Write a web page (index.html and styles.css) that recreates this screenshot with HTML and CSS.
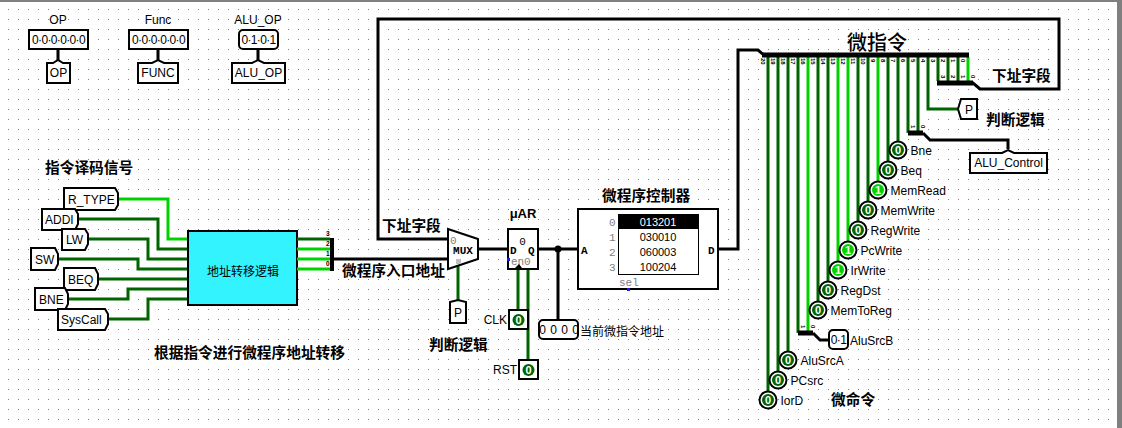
FILE: index.html
```html
<!DOCTYPE html>
<html lang="zh">
<head>
<meta charset="utf-8">
<title>微程序控制器</title>
<link rel="stylesheet" href="styles.css">
</head>
<body>
<svg class="canvas" width="1122" height="428" viewBox="0 0 1122 428" xmlns="http://www.w3.org/2000/svg">
  <rect class="frame" width="1122" height="2"/>
  <rect class="frame" x="1117" width="5" height="428"/>

  <!-- top pins -->
  <text class="t c" x="58" y="24">OP</text>
  <text class="t c" x="158" y="24">Func</text>
  <text class="t c" x="258" y="24">ALU_OP</text>
  <path class="bus" d="M58 49V60M158 49V60M258 49V60"/>
  <rect class="shape" x="29" y="30" width="59" height="19"/>
  <rect class="shape" x="129" y="30" width="59" height="19"/>
  <rect class="shape" x="239" y="30" width="39" height="19" rx="4"/>
  <text class="t c digits" x="58.500" y="43.500">0·0·0·0·0·0</text>
  <text class="t c digits" x="158.500" y="43.500">0·0·0·0·0·0</text>
  <text class="t c digits" x="258.500" y="43.500">0·1·0·1</text>
  <polygon class="shape" points="47,63 53,63 58,60 63,63 70,63 70,83 47,83"/>
  <polygon class="shape" points="138,63 152,63 158,60 164,63 178,63 178,83 138,83"/>
  <polygon class="shape" points="232,63 252,63 258,60 264,63 285,63 285,83 232,83"/>
  <text class="t c" x="58.500" y="77">OP</text>
  <text class="t c" x="158" y="77">FUNC</text>
  <text class="t c" x="258.500" y="77">ALU_OP</text>

  <text class="cn b" x="45" y="173">指令译码信号</text>

  <!-- address logic inputs -->
  <path class="on" d="M118 199H168V239H189"/>
  <path class="off" d="M78 219H158V249H189M88 239H148V259H189M58 259H138V269H189M98 279H189M68 299H128V289H189M108 319H148V299H189"/>
  <polygon class="shape" points="64,188 115,188 118,193 118,205 115,210 64,210"/>
  <polygon class="shape" points="42,209 75,209 78,214 78,224 75,230 42,230"/>
  <polygon class="shape" points="62,229 85,229 88,234 88,244 85,250 62,250"/>
  <polygon class="shape" points="31,248 55,248 58,254 58,264 55,270 31,270"/>
  <polygon class="shape" points="64,268 95,268 98,274 98,284 95,290 64,290"/>
  <polygon class="shape" points="35,288 65,288 68,294 68,304 65,310 35,310"/>
  <polygon class="shape" points="58,309 105,309 108,314 108,324 105,330 58,330"/>
  <text class="t" x="68" y="204">R_TYPE</text>
  <text class="t" x="45" y="224">ADDI</text>
  <text class="t" x="66" y="244">LW</text>
  <text class="t" x="35" y="264">SW</text>
  <text class="t" x="68" y="284">BEQ</text>
  <text class="t" x="39" y="304">BNE</text>
  <text class="t" x="61" y="324">SysCall</text>

  <rect class="logic" x="188" y="231" width="109" height="74"/>
  <text class="cn m" x="243" y="276">地址转移逻辑</text>
  <path class="off" d="M297 239H330"/>
  <path class="on" d="M297 249H330M297 259H330M297 269H330"/>
  <rect class="fill" x="330" y="238" width="4" height="33"/>
  <text class="tiny" x="326" y="236">3</text>
  <text class="tiny" x="326" y="246">2</text>
  <text class="tiny" x="326" y="256">1</text>
  <text class="tiny" x="326" y="266">0</text>
  <path class="bus" d="M334 259H448"/>
  <text class="cn b" x="342" y="276">微程序入口地址</text>
  <text class="cn b" x="154" y="358">根据指令进行微程序地址转移</text>

  <!-- feedback loop -->
  <path class="bus" d="M448 239H378V19H1059V89H980L973 83H937"/>
  <text class="cn b" x="382" y="231">下址字段</text>

  <!-- MUX -->
  <path class="off" d="M458 266V300"/>
  <path class="bus" d="M478 249H508"/>
  <polygon class="shape" points="448,229 478,239 478,259 448,269"/>
  <text class="mono c" x="463" y="254">MUX</text>
  <text class="gray" x="450" y="244">0</text>
  <rect class="sel" x="456" y="259" width="5" height="5"/>
  <polygon class="shape" points="450,302 458,300 466,302 466,323 450,323"/>
  <text class="t c" x="458" y="317">P</text>
  <text class="cn b" x="429" y="350">判断逻辑</text>

  <!-- register -->
  <text class="ui c" x="523" y="218">μAR</text>
  <path class="off" d="M518 269V310M528 269V360"/>
  <rect class="shape" x="508" y="229" width="30" height="40"/>
  <text class="gray dark c" x="522.500" y="245">0</text>
  <text class="mono" x="510" y="254">D</text>
  <text class="mono" x="528" y="254">Q</text>
  <text class="gray" x="511" y="265">en</text>
  <text class="gray" x="524" y="265">0</text>
  <rect class="blue" x="507" y="258" width="3" height="3"/>
  <polygon class="fill" points="515,268 519,264 522,268"/>

  <rect class="shape" x="509" y="310" width="19" height="19"/>
  <circle class="led0" cx="518.500" cy="320" r="6"/>
  <text class="ledt" x="518.500" y="324">0</text>
  <text class="t e" x="507" y="324">CLK</text>
  <rect class="shape" x="519" y="360" width="19" height="19"/>
  <circle class="led0" cx="528.500" cy="370" r="6"/>
  <text class="ledt" x="528.500" y="374">0</text>
  <text class="t e" x="517" y="374">RST</text>

  <!-- output to ROM -->
  <path class="bus" d="M538 249H578M558 249V320"/>
  <circle class="fill" cx="558" cy="249" r="3.500"/>
  <rect class="shape" x="539" y="320" width="39" height="19" rx="4"/>
  <text class="t c" x="559" y="334" word-spacing="1">0 0 0 0</text>
  <text class="cn r" x="580" y="336">当前微指令地址</text>

  <!-- ROM -->
  <text class="cn b" x="602" y="201">微程序控制器</text>
  <rect class="shape" x="578" y="209" width="140" height="80"/>
  <rect class="thin" x="618.500" y="214.500" width="80" height="60"/>
  <rect class="fill" x="618" y="214" width="80.500" height="15"/>
  <text class="mem c inv" x="658" y="226">013201</text>
  <text class="mem c" x="658" y="241">030010</text>
  <text class="mem c" x="658" y="256">060003</text>
  <text class="mem c" x="658" y="271">100204</text>
  <text class="gray" x="609" y="226">0</text>
  <text class="gray" x="609" y="241">1</text>
  <text class="gray" x="609" y="256">2</text>
  <text class="gray" x="609" y="271">3</text>
  <text class="mono" x="581" y="254">A</text>
  <text class="mono" x="708" y="254">D</text>
  <text class="gray" x="619" y="286">sel</text>
  <rect class="blue" x="627" y="288" width="3" height="3"/>
  <path class="bus" d="M718 249H738V50H758L765 56"/>

  <!-- control bus -->
  <text class="cn big" x="847" y="50">微指令</text>
  <path class="off" d="M768 57V400M778 57V380M788 57V360M798 57V333M818 57V310M828 57V290M858 57V230M868 57V210M888 57V170M898 57V150M908 57V133M918 57V133M928 57V109H958M938 57V81M948 57V81M958 57V81"/>
  <path class="on" d="M808 57V333M838 57V270M848 57V250M878 57V190M968 57V81"/>
  <path class="thick" d="M762 55H969M937 83H973M908 133H923M798 333H813"/>
  <path class="bus" d="M923 133L930 140H1008V149M813 333L820 340H829"/>

  <g class="rot">
    <text transform="translate(761 58) rotate(90)">20</text>
    <text transform="translate(771 58) rotate(90)">19</text>
    <text transform="translate(781 58) rotate(90)">18</text>
    <text transform="translate(791 58) rotate(90)">17</text>
    <text transform="translate(801 58) rotate(90)">16</text>
    <text transform="translate(811 58) rotate(90)">15</text>
    <text transform="translate(821 58) rotate(90)">14</text>
    <text transform="translate(831 58) rotate(90)">13</text>
    <text transform="translate(841 58) rotate(90)">12</text>
    <text transform="translate(851 58) rotate(90)">11</text>
    <text transform="translate(861 58) rotate(90)">10</text>
    <text transform="translate(871 59) rotate(90)">9</text>
    <text transform="translate(881 59) rotate(90)">8</text>
    <text transform="translate(891 59) rotate(90)">7</text>
    <text transform="translate(901 59) rotate(90)">6</text>
    <text transform="translate(911 59) rotate(90)">5</text>
    <text transform="translate(921 59) rotate(90)">4</text>
    <text transform="translate(931 59) rotate(90)">3</text>
    <text transform="translate(941 59) rotate(90)">2</text>
    <text transform="translate(951 59) rotate(90)">1</text>
    <text transform="translate(961 59) rotate(90)">0</text>
    <text transform="translate(941 75) rotate(90)">3</text>
    <text transform="translate(951 75) rotate(90)">2</text>
    <text transform="translate(961 75) rotate(90)">1</text>
    <text transform="translate(971 75) rotate(90)">0</text>
    <text transform="translate(911 125) rotate(90)">1</text>
    <text transform="translate(921 125) rotate(90)">0</text>
    <text transform="translate(801 325) rotate(90)">1</text>
    <text transform="translate(811 325) rotate(90)">0</text>
  </g>

  <text class="cn b" x="992" y="81">下址字段</text>
  <polygon class="shape" points="958,109 961,99 977,99 977,119 961,119"/>
  <text class="t c" x="969" y="114">P</text>
  <text class="cn b" x="986" y="125">判断逻辑</text>
  <polygon class="shape" points="970,153 1002,153 1008,150 1014,153 1047,153 1047,173 970,173"/>
  <text class="t c" x="1008.500" y="167">ALU_Control</text>

  <!-- LEDs -->
  <circle class="ring" cx="898" cy="150" r="8.500"/><circle class="led0" cx="898" cy="150" r="6"/><text class="ledt" x="898" y="154">0</text><text class="t" x="910.500" y="155">Bne</text>
  <circle class="ring" cx="888" cy="170" r="8.500"/><circle class="led0" cx="888" cy="170" r="6"/><text class="ledt" x="888" y="174">0</text><text class="t" x="900.500" y="175">Beq</text>
  <circle class="ring" cx="878" cy="190" r="8.500"/><circle class="led1" cx="878" cy="190" r="6"/><text class="ledt" x="878" y="194">1</text><text class="t" x="890.500" y="195">MemRead</text>
  <circle class="ring" cx="868" cy="210" r="8.500"/><circle class="led0" cx="868" cy="210" r="6"/><text class="ledt" x="868" y="214">0</text><text class="t" x="880.500" y="215">MemWrite</text>
  <circle class="ring" cx="858" cy="230" r="8.500"/><circle class="led0" cx="858" cy="230" r="6"/><text class="ledt" x="858" y="234">0</text><text class="t" x="870.500" y="235">RegWrite</text>
  <circle class="ring" cx="848" cy="250" r="8.500"/><circle class="led1" cx="848" cy="250" r="6"/><text class="ledt" x="848" y="254">1</text><text class="t" x="860.500" y="255">PcWrite</text>
  <circle class="ring" cx="838" cy="270" r="8.500"/><circle class="led1" cx="838" cy="270" r="6"/><text class="ledt" x="838" y="274">1</text><text class="t" x="850.500" y="275">IrWrite</text>
  <circle class="ring" cx="828" cy="290" r="8.500"/><circle class="led0" cx="828" cy="290" r="6"/><text class="ledt" x="828" y="294">0</text><text class="t" x="840.500" y="295">RegDst</text>
  <circle class="ring" cx="818" cy="310" r="8.500"/><circle class="led0" cx="818" cy="310" r="6"/><text class="ledt" x="818" y="314">0</text><text class="t" x="830.500" y="315">MemToReg</text>
  <rect class="shape" x="829" y="330" width="19" height="19" rx="4"/>
  <text class="t c digits" x="838.500" y="344">0·1</text>
  <text class="t" x="850" y="345">AluSrcB</text>
  <circle class="ring" cx="788" cy="360" r="8.500"/><circle class="led0" cx="788" cy="360" r="6"/><text class="ledt" x="788" y="364">0</text><text class="t" x="800.500" y="365">AluSrcA</text>
  <circle class="ring" cx="778" cy="380" r="8.500"/><circle class="led0" cx="778" cy="380" r="6"/><text class="ledt" x="778" y="384">0</text><text class="t" x="790.500" y="385">PCsrc</text>
  <circle class="ring" cx="768" cy="400" r="8.500"/><circle class="led0" cx="768" cy="400" r="6"/><text class="ledt" x="768" y="404">0</text><text class="t" x="780.500" y="405">IorD</text>
  <text class="cn b" x="831" y="405">微命令</text>
</svg>
</body>
</html>
```
FILE: styles.css
```css
html, body {
  margin: 0;
  padding: 0;
  background: #fff;
  overflow: hidden;
}

.canvas {
  display: block;
  background-color: #808080;
  background-image:
    linear-gradient(90deg, transparent 1px, #fff 1px),
    linear-gradient(180deg, transparent 1px, #fff 1px);
  background-size: 10px 10px;
  background-position: 8px 9px;
}

.frame { fill: #808080; }

path { fill: none; stroke-linejoin: miter; }
.bus { stroke: #000; stroke-width: 3; }
.thick { stroke: #000; stroke-width: 5; }
.on { stroke: #00d200; stroke-width: 3; }
.off { stroke: #006400; stroke-width: 3; }

.shape { fill: #fff; stroke: #000; stroke-width: 2; }
.thin { fill: #fff; stroke: #000; stroke-width: 1; }
.logic { fill: #33f3ff; stroke: #000; stroke-width: 2; }
.fill { fill: #000; }
.sel { fill: #c0c0c0; }
.blue { fill: #1a1ae0; }
.ring { fill: #fff; stroke: #000; stroke-width: 2; }
.led0 { fill: #006400; }
.led1 { fill: #00d200; }

text { fill: #000; }
.t { font: 12px "Liberation Sans", Arial, sans-serif; }
.c { text-anchor: middle; }
.e { text-anchor: end; }
.digits { letter-spacing: -0.65px; }
.cn { font-family: "Noto Sans CJK SC", "Liberation Sans", sans-serif; }
.b { font-size: 14.7px; font-weight: 700; }
.r { font-size: 12px; font-weight: 400; }
.m { font-size: 12px; font-weight: 400; text-anchor: middle; }
.big { font-size: 20px; font-weight: 500; }
.ui { font: 700 13px "Liberation Sans", Arial, sans-serif; }
.mono { font: 700 11px "Liberation Mono", "Courier New", monospace; }
.gray { font: 11px "Liberation Mono", "Courier New", monospace; fill: #808080; }
.gray.dark { fill: #000; }
.mem { font: 11px "Liberation Sans", Arial, sans-serif; }
.inv { fill: #fff; }
.tiny { font: 700 6.500px "Liberation Sans", Arial, sans-serif; }
.rot text { font: 700 6px "Liberation Sans", Arial, sans-serif; }
.ledt { font: 700 11px "Liberation Sans", Arial, sans-serif; fill: #fff; text-anchor: middle; }
```
